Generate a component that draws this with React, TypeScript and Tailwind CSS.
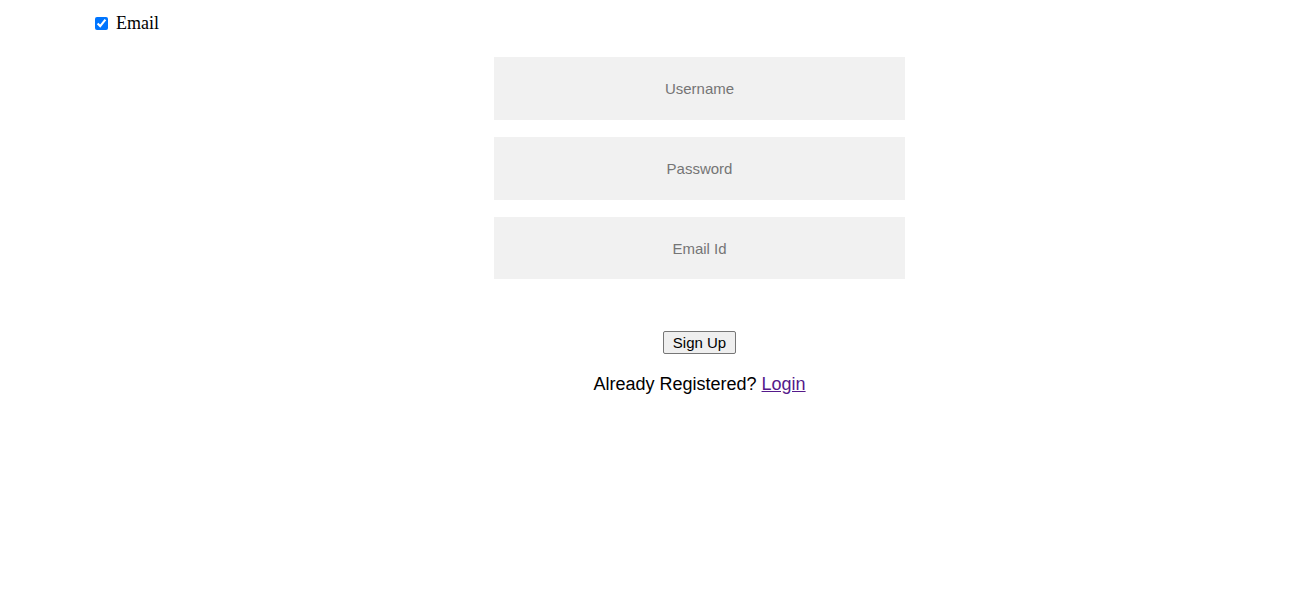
import React from "react";

export default function App() {
  return (
    <div className="w-[1308px] h-[614px] bg-white">
      <div className="flex items-center pl-[95px] pt-[13px] h-[20px] box-content">
        <input
          type="checkbox"
          defaultChecked
          className="w-[13px] h-[13px] m-0 accent-[#0075ff]"
        />
        <span className="ml-[8px] text-[18px] leading-[20px] text-black font-['Liberation_Serif',serif]">
          Email
        </span>
      </div>
      <div className="ml-[494px] w-[411px] mt-[24px] flex flex-col font-['Liberation_Sans',Arial,sans-serif]">
        <input
          type="text"
          placeholder="Username"
          className="h-[63px] bg-[#f1f1f1] text-center text-[15px] placeholder:text-[#757575] outline-none border-0"
        />
        <input
          type="password"
          placeholder="Password"
          className="mt-[17px] h-[63px] bg-[#f1f1f1] text-center text-[15px] placeholder:text-[#757575] outline-none border-0"
        />
        <input
          type="email"
          placeholder="Email Id"
          className="mt-[17px] h-[62px] bg-[#f1f1f1] text-center text-[15px] placeholder:text-[#757575] outline-none border-0"
        />
        <div className="flex justify-center mt-[52px]">
          <button className="w-[73px] h-[23px] bg-[#efefef] border border-[#767676] rounded-[2px] text-[15px] leading-[17px] text-black">
            Sign Up
          </button>
        </div>
        <p className="mt-[20px] text-center text-[18px] leading-[21px] text-black">
          Already Registered?{" "}
          <a href="#" className="underline text-[#551a8b]">
            Login
          </a>
        </p>
      </div>
    </div>
  );
}
